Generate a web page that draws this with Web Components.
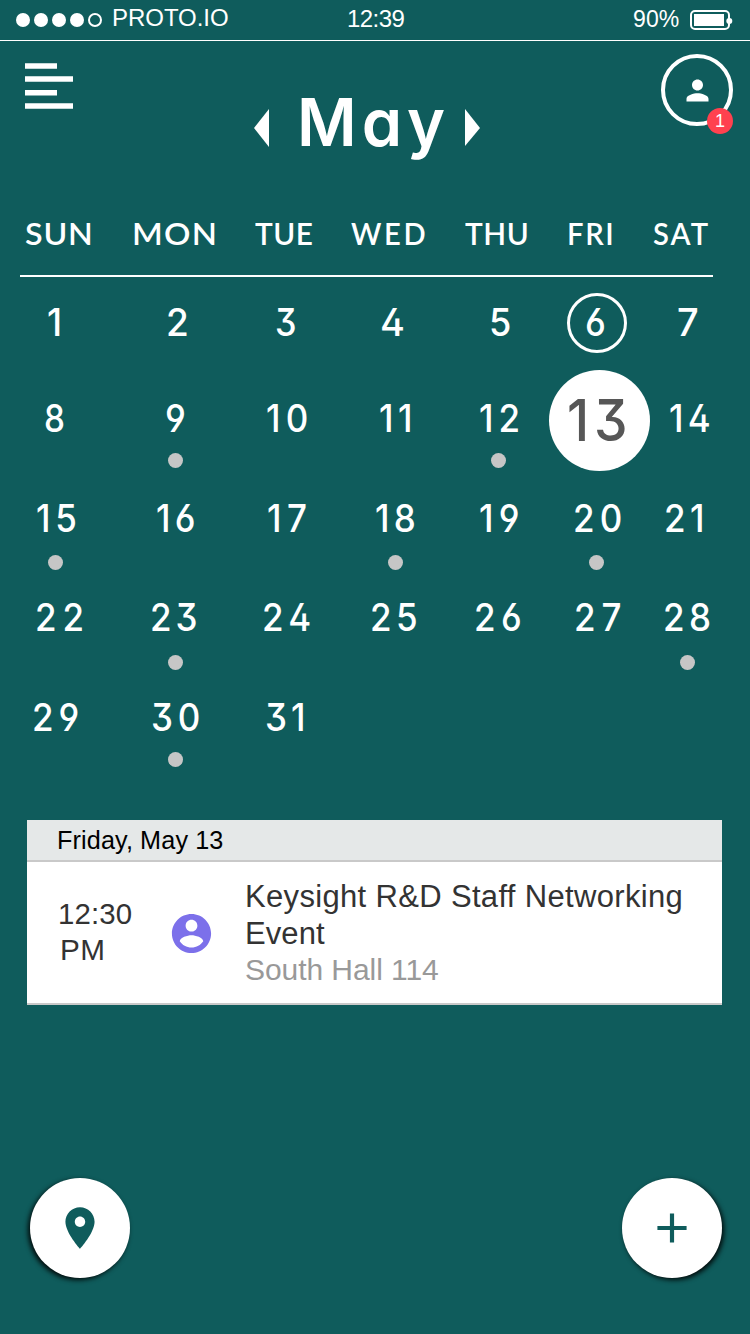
<!DOCTYPE html>
<html lang="en">
<head>
<meta charset="utf-8">
<title>May calendar</title>
<style>
html,body{margin:0;padding:0}
body{width:750px;height:1334px;overflow:hidden;background:#0f5c5c;color:#fff;font-family:"Liberation Sans",Arial,sans-serif}
</style>
</head>
<body>
<calendar-app></calendar-app>
<script>
/* A line of text whose drawn width is set by tracking (several glyphs) or by glyph width (one glyph). */
class FitText extends HTMLElement {
  connectedCallback() {
    const root = this.attachShadow({mode: 'open'});
    const size = +this.getAttribute('size'), w = +this.getAttribute('w');
    const family = this.getAttribute('family') || 'Inter';
    const weight = this.getAttribute('weight') || 500;
    const sx = +(this.getAttribute('sx') || 1);
    const text = this.getAttribute('text');
    const ctx = document.createElement('canvas').getContext('2d');
    ctx.font = `${weight} ${size}px "${family}"`;
    const m = ctx.measureText(text);
    const ink = m.actualBoundingBoxLeft + m.actualBoundingBoxRight;
    let scale = sx, ls = 0;
    if (text.length > 1) ls = (w / sx - ink) / (text.length - 1);
    else scale = w / ink;
    root.innerHTML = `<style>
      :host{display:block;width:${w}px;white-space:pre;font:${weight} ${size}px/${this.getAttribute('lh') || 40}px "${family}",sans-serif}
      span{display:inline-block;transform-origin:0 50%;transform:scaleX(${scale});letter-spacing:${ls}px;margin-left:${m.actualBoundingBoxLeft * scale}px;font-feature-settings:${this.getAttribute('features') || 'normal'}}
      </style><span></span>`;
    root.querySelector('span').textContent = text;
  }
}
customElements.define('fit-text', FitText);

const define = (name, html) => customElements.define(name, class extends HTMLElement {
  constructor() {
    super();
    this.attachShadow({mode: 'open'}).innerHTML = html;
  }
});

define('status-bar', `<style>
  :host{display:grid;grid-template-columns:347px 286px 1fr;align-items:center;border-bottom:1px solid #fff;box-sizing:border-box;height:41px}
  .l{display:flex;align-items:center;padding-left:16px}
  i{width:14px;height:14px;border-radius:50%;background:#fff;margin-right:4px;box-sizing:border-box}
  i.o{background:none;border:2px solid #fff;margin-right:12px}
  .l fit-text{margin:-4px 0 0 -1px}
  .r{display:flex;align-items:center;gap:11px}
  svg{display:block}
  </style>
  <div class="l"><i></i><i></i><i></i><i></i><i class="o"></i><fit-text family="Liberation Sans" weight="400" size="24" w="115" text="PROTO.IO"></fit-text></div>
  <fit-text family="Liberation Sans" weight="400" size="24" w="56.500" text="12:39" style="margin-left:1px;margin-top:-2px"></fit-text>
  <div class="r"><fit-text family="Liberation Sans" weight="400" size="24" w="45" sx="0.96" text="90%" style="margin-left:1px;margin-top:-2px"></fit-text>
  <svg width="43" height="22" viewBox="0 0 43 22"><rect x="1" y="2" width="38" height="18" rx="4" fill="none" stroke="#fff" stroke-width="2"/><rect x="4" y="5" width="30" height="12" fill="#fff"/><circle cx="39.3" cy="12" r="3" fill="#fff"/></svg></div>`);

define('top-bar', `<style>
  :host{display:flex;justify-content:space-between;align-items:flex-start;height:159px;padding:0 17px 0 25px}
  .menu{margin-top:22px;display:block}
  .month{display:flex;margin:41px 0 0 -1px;align-items:flex-start}
  .month svg{display:block;margin-top:27px}
  .month fit-text{margin:0 25px 0 32px}
  .user{position:relative;width:64px;height:64px;border:4px solid #fff;border-radius:50%;margin-top:13px;display:grid;place-items:center}
  .user b{position:absolute;right:-4px;bottom:-12px;width:26px;height:26px;border-radius:50%;background:#ff414f;font:400 18px/26px "Liberation Sans",sans-serif;text-align:center}
  </style>
  <svg class="menu" width="48" height="47" viewBox="0 0 48 47" fill="#fff"><path d="M0 .3h32v5.4H0zM0 13.3h48v5.4H0zM0 27h32v5.4H0zM0 40.2h48v5.5H0z"/></svg>
  <div class="month">
    <svg width="15" height="38" viewBox="0 0 15 38"><path d="M15 0v38L0 19z" fill="#fff"/></svg>
    <fit-text size="66" lh="80" w="139" sx="0.98" weight="560" text="May" features="'cv11'"></fit-text>
    <svg width="15" height="38" viewBox="0 0 15 38"><path d="M0 0v37l15-18z" fill="#fff"/></svg>
  </div>
  <div class="user"><svg width="33" height="33" viewBox="0 0 24 24"><path fill="#fff" d="M12 12c2.21 0 4-1.79 4-4s-1.79-4-4-4-4 1.79-4 4 1.79 4 4 4zm0 2c-2.67 0-8 1.34-8 4v2h16v-2c0-2.66-5.33-4-8-4z"/></svg><b>1</b></div>`);

/* Column starts, and per-label left edge and width inside the sheet. */
const COLS = [20, 125, 245, 345, 450, 549, 651];
const WEEKDAYS = [['SUN',24.5,66,1.04],['MON',134,81,1.06],['TUE',255,57,.96],['WED',351,74,.94],['THU',464.5,62,.96],['FRI',568.5,43,.94],['SAT',653,55.5,.94]];
const WEEKS = [
  {h:90, dot:0, up:0, days:[[1,48,11.5],[2,168,18.5],[3,277,18],[4,382,21],[5,491,19],[6,587,18.5,'ring'],[7,678,20]]},
  {h:102, dot:42.5, up:0, days:[[8,46,17.5],[9,167,18.5,'dot',175.5],[10,267,40],[11,380,30],[12,480,38,'dot',498.5],[13,569,56.5,'disc'],[14,670,39]]},
  {h:98, dot:44.5, up:0, days:[[15,37,38.5,'dot',55.5],[16,157,38],[17,268,38.5],[18,376,38,'dot',395.5],[19,480,39],[20,575,46,'dot',596.5],[21,666,36]]},
  {h:101, dot:45, up:2, days:[[22,36.5,45],[23,152,44,'dot',175.5],[24,263.5,45.5],[25,372,44.5],[26,475.5,45.5],[27,575.5,45],[28,665,44.5,'dot',687.5]]},
  {h:99, dot:42, up:2, days:[[29,34,45],[30,153,46,'dot',175.5],[31,266.5,36]]}
];

customElements.define('day-cell', class extends HTMLElement {
  connectedCallback() {
    const {n, x, w, kind, dotX, dotY, up} = this.data;
    const big = kind === 'disc';
    this.attachShadow({mode: 'open'}).innerHTML = `<style>
      :host{display:flex;align-items:center;position:relative;padding-left:${x}px;${big ? 'color:#575757' : ''}}
      fit-text{position:relative;margin-bottom:${up}px}
      .ring{position:absolute;width:54px;height:54px;border:3px solid #fff;border-radius:50%;left:18px;top:16px}
      .disc{position:absolute;width:101px;height:101px;background:#fff;border-radius:50%;left:0;top:3px}
      .dot{position:absolute;width:15px;height:15px;border-radius:50%;background:#c6c6c6;left:${dotX - 7.5}px;top:calc(50% + ${dotY - 7.5}px)}
      </style>${kind ? `<div class="${kind}"></div>` : ''}<fit-text sx="0.92" weight="540" size="${big ? 58 : 38}" w="${w}" text="${n}" features="'ss01'" lh="${big ? 64 : 40}" style="${big ? 'margin-top:4px' : ''}"></fit-text>`;
  }
});

customElements.define('month-grid', class extends HTMLElement {
  connectedCallback() {
    const root = this.attachShadow({mode: 'open'});
    root.innerHTML = `<style>
      :host{display:block;padding-left:20px}
      .row{display:grid;grid-template-columns:105px 120px 100px 105px 99px 102px 79px}
      .head{height:75px;width:693px;border-bottom:2px solid #fff;align-items:start;grid-template-columns:105px 120px 100px 105px 99px 102px 62px}
      .head fit-text{margin-top:13px}
      </style><div class="row head">${WEEKDAYS.map(([t, x, w, sx], i) => `<fit-text family="Lato" weight="600" sx="${sx}" size="31" w="${w}" text="${t}" style="margin-left:${x - COLS[i]}px"></fit-text>`).join('')}</div>`;
    for (const week of WEEKS) {
      const row = document.createElement('div');
      row.className = 'row';
      row.style.height = week.h + 'px';
      week.days.forEach(([n, x, w, kind, dx], i) => {
        const c = document.createElement('day-cell');
        c.data = {n, x: x - COLS[i], w, kind, dotX: (dx || 0) - COLS[i], dotY: week.dot, up: week.up};
        row.append(c);
      });
      root.append(row);
    }
  }
});

define('agenda-card', `<style>
  :host{display:block;margin:53px 28px 0 27px;background:#fff;color:#333;border-bottom:2px solid #c9c9c9}
  header{display:flex;height:40px;background:#e5e8e8;border-bottom:2px solid #c9c9c9;padding-left:32px;color:#000}
  .body{display:flex;height:141px}
  .time{padding:34px 0 0 32px;width:81px}
  .icon{width:103px;padding-top:48px}
  svg{display:block;margin-left:28px}
  .info{padding-top:16px}
  .place{color:#999}
  </style>
  <header><fit-text family="Liberation Sans" weight="400" size="26" w="164" sx="0.97" text="Friday, May 13"></fit-text></header>
  <div class="body">
    <div class="time"><fit-text family="Liberation Sans" weight="400" size="30" w="71.500" sx="0.98" lh="36" text="12:30" style="margin-left:1px"></fit-text><fit-text family="Liberation Sans" weight="400" size="30" w="41" sx="0.99" lh="36" text="PM" style="margin-left:3px"></fit-text></div>
    <div class="icon"><svg width="47" height="47" viewBox="0 0 24 24"><path fill="#7c70ea" d="M12 2C6.48 2 2 6.48 2 12s4.48 10 10 10 10-4.480 10-10S17.520 2 12 2zm0 3c1.660 0 3 1.340 3 3s-1.340 3-3 3-3-1.340-3-3 1.340-3 3-3zm0 14.200c-2.500 0-4.710-1.280-6-3.220.030-1.990 4-3.080 6-3.080 1.990 0 5.970 1.090 6 3.080-1.290 1.940-3.500 3.220-6 3.220z"/></svg></div>
    <div class="info"><fit-text family="Liberation Sans" weight="400" size="31" w="434.500" lh="37" text="Keysight R&amp;D Staff Networking" style="margin-left:4px"></fit-text><fit-text family="Liberation Sans" weight="400" size="31" w="78" lh="37" text="Event" style="margin-left:4px"></fit-text><fit-text class="place" family="Liberation Sans" weight="400" size="30" w="192" lh="36" text="South Hall 114" style="margin-left:3px"></fit-text></div>
  </div>`);

define('round-button', `<style>
  :host{display:grid;place-items:center;width:100px;height:100px;border-radius:50%;background:#fff;color:#0f5c5c;box-shadow:var(--dx,2px) 2px 5px rgba(0,0,0,.9)}
  </style><slot></slot>`);

define('calendar-app', `<style>
  :host{display:flex;flex-direction:column;height:1334px}
  nav{display:flex;justify-content:space-between;margin-top:auto;padding:0 28px 56px 30px}
  svg{display:block}
  </style>
  <status-bar></status-bar><top-bar></top-bar><month-grid></month-grid><agenda-card></agenda-card>
  <nav>
    <round-button style="--dx:-2px"><svg width="50" height="50" viewBox="0 0 24 24"><path fill="currentColor" d="M12 2C8.130 2 5 5.130 5 9c0 5.250 7 13 7 13s7-7.750 7-13c0-3.870-3.130-7-7-7zm0 9.500c-1.380 0-2.500-1.120-2.500-2.500s1.120-2.500 2.500-2.500 2.500 1.120 2.500 2.500-1.120 2.500-2.500 2.500z"/></svg></round-button>
    <round-button><svg width="50" height="50" viewBox="0 0 24 24"><path fill="currentColor" d="M19 13h-6v6h-2v-6H5v-2h6V5h2v6h6v2z"/></svg></round-button>
  </nav>`);
</script>
</body>
</html>
